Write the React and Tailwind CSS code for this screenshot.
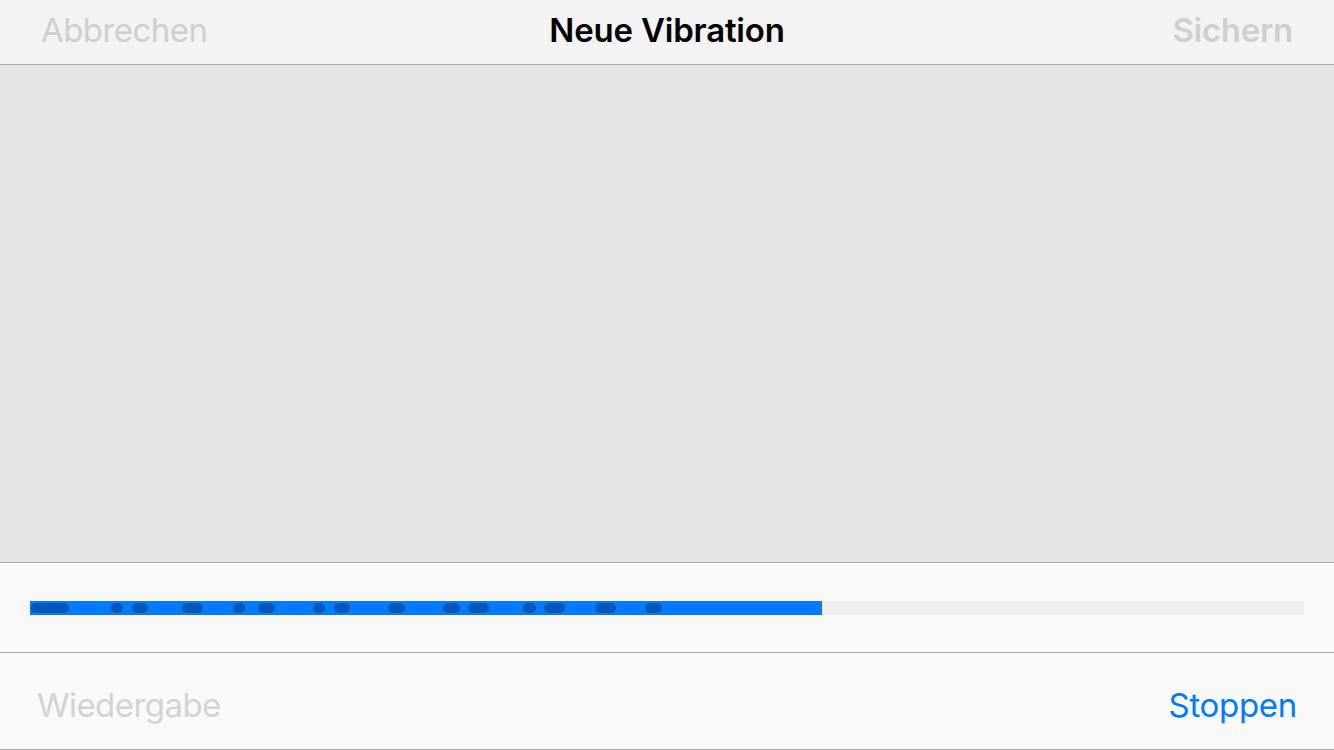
import React from 'react';

const pulses = [
    [1, 38], [81, 12], [102, 16], [152, 21], [203, 12], [228, 17],
    [283, 12], [304, 16], [358, 17], [413, 17], [438, 21], [493, 13],
    [514, 21], [565, 21], [615, 17],
];

const App = () => {
    const font = { fontFamily: 'Inter, "Liberation Sans", sans-serif' };

    return (
        <div className="w-[1334px] h-[750px] flex flex-col overflow-hidden" style={font}>
            <div className="h-[65px] shrink-0 bg-[#f3f3f3] border-b border-[#a9a9a9] flex items-center justify-between px-[41px] pb-[2px]">
                <span className="text-[33px] tracking-[-0.55px] text-[#cfcfcf] w-[250px]">Abbrechen</span>
                <span className="text-[33px] font-semibold tracking-[-0.2px] text-black">Neue Vibration</span>
                <span className="text-[33px] font-semibold tracking-[-0.3px] text-[#cfcfcf] w-[250px] text-right">Sichern</span>
            </div>

            <div className="flex-1 bg-[#e5e5e5] border-b border-[#a9a9a9]"></div>

            <div className="h-[90px] shrink-0 bg-[#f9f9f9] border-b border-[#a9a9a9] pt-[38px] px-[30px]">
                <div className="h-[14px] w-[1274px] bg-[#efefef] flex">
                    <div className="h-full w-[792px] bg-[#007aff]">
                        <svg width="792" height="14" viewBox="0 0 792 14">
                            {pulses.map(([x, w], i) => (
                                <rect key={i} x={x} y="2" width={w} height="10" rx="5" fill="#0057b8" />
                            ))}
                        </svg>
                    </div>
                </div>
            </div>

            <div className="h-[97px] shrink-0 bg-[#f9f9f9] border-b border-[#a9a9a9] flex items-center justify-between pl-[37px] pr-[37px] pt-[10px]">
                <span className="text-[33px] tracking-[-0.55px] text-[#d3d3d3]">Wiedergabe</span>
                <span className="text-[33px] tracking-[-0.3px] text-[#007aff]">Stoppen</span>
            </div>
        </div>
    );
};

export default App;
